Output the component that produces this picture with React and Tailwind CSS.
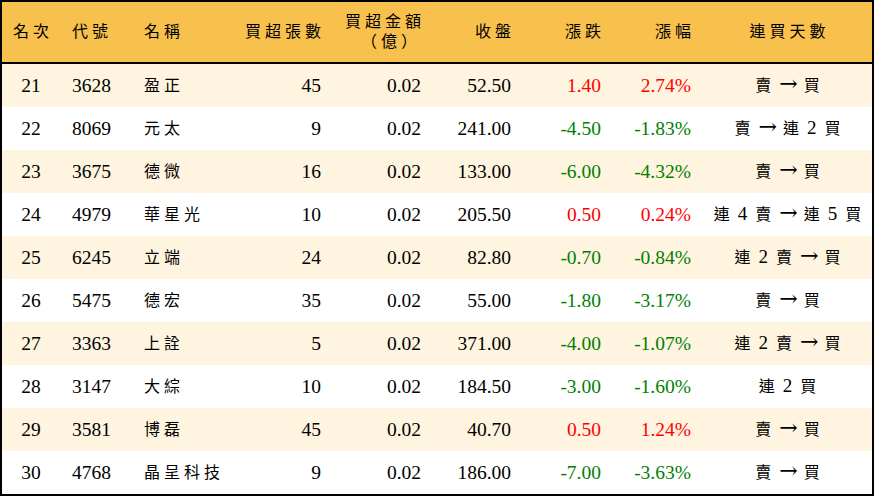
import React from 'react';

const rows = [
  ['21', '3628', '盈正', '45', '0.02', '52.50', '1.40', '2.74%', '賣 → 買'],
  ['22', '8069', '元太', '9', '0.02', '241.00', '-4.50', '-1.83%', '賣 → 連 2 買'],
  ['23', '3675', '德微', '16', '0.02', '133.00', '-6.00', '-4.32%', '賣 → 買'],
  ['24', '4979', '華星光', '10', '0.02', '205.50', '0.50', '0.24%', '連 4 賣 → 連 5 買'],
  ['25', '6245', '立端', '24', '0.02', '82.80', '-0.70', '-0.84%', '連 2 賣 → 買'],
  ['26', '5475', '德宏', '35', '0.02', '55.00', '-1.80', '-3.17%', '賣 → 買'],
  ['27', '3363', '上詮', '5', '0.02', '371.00', '-4.00', '-1.07%', '連 2 賣 → 買'],
  ['28', '3147', '大綜', '10', '0.02', '184.50', '-3.00', '-1.60%', '連 2 買'],
  ['29', '3581', '博磊', '45', '0.02', '40.70', '0.50', '1.24%', '賣 → 買'],
  ['30', '4768', '晶呈科技', '9', '0.02', '186.00', '-7.00', '-3.63%', '賣 → 買'],
];

const cols = 'grid grid-cols-[58px_72px_108px_93px_100px_90px_90px_90px_169px]';

// split streak text so arrows and digits get their own size
function Streak({ text }) {
  const parts = text.split(/(→|\d)/);
  return (
    <>
      {parts.map((p, i) => {
        if (p === '→')
          return (
            <span key={i} className="font-['DejaVu_Serif'] text-[22px] tracking-[0px] leading-none">
              →
            </span>
          );
        if (/\d/.test(p))
          return (
            <span key={i} className="text-[19px] leading-none">
              {p}
            </span>
          );
        return <React.Fragment key={i}>{p}</React.Fragment>;
      })}
    </>
  );
}

export default function App() {
  return (
    <div className="w-[874px] h-[496px] border-2 border-black bg-white text-black text-[16px] overflow-hidden font-['Liberation_Serif','DejaVu_Serif','Noto_Sans_CJK_TC',serif]">
      <div className={`${cols} h-[62px] bg-[#f8c04c] border-b-2 border-black items-center tracking-[4px]`}>
        <div className="text-center pl-[4px]">名次</div>
        <div className="pl-[12px]">代號</div>
        <div className="pl-[12px]">名稱</div>
        <div className="text-right pr-[8px]">買超張數</div>
        <div className="text-right pr-[8px] leading-[20px]">
          <div>買超金額</div>
          <div className="pr-[4px]">（億）</div>
        </div>
        <div className="text-right pr-[8px]">收盤</div>
        <div className="text-right pr-[8px]">漲跌</div>
        <div className="text-right pr-[8px]">漲幅</div>
        <div className="text-center pl-[4px]">連買天數</div>
      </div>

      {rows.map((r, i) => {
        const up = !r[6].startsWith('-');
        const color = up ? 'text-[#ff0000]' : 'text-[#008000]';
        const num = 'text-[19.5px]';
        return (
          <div
            key={r[0]}
            className={`${cols} h-[43px] items-center ${i % 2 === 0 ? 'bg-[#fef4df]' : 'bg-white'}`}
          >
            <div className={`text-center ${num}`}>{r[0]}</div>
            <div className={`pl-[12px] ${num}`}>{r[1]}</div>
            <div className="pl-[12px] tracking-[4px]">{r[2]}</div>
            <div className={`text-right pr-[12px] ${num}`}>{r[3]}</div>
            <div className={`text-right pr-[12px] ${num}`}>{r[4]}</div>
            <div className={`text-right pr-[12px] ${num}`}>{r[5]}</div>
            <div className={`text-right pr-[12px] ${num} ${color}`}>{r[6]}</div>
            <div className={`text-right pr-[12px] ${num} ${color}`}>{r[7]}</div>
            <div className="text-center tracking-[2px] pl-[2px] whitespace-nowrap">
              <Streak text={r[8]} />
            </div>
          </div>
        );
      })}
    </div>
  );
}
